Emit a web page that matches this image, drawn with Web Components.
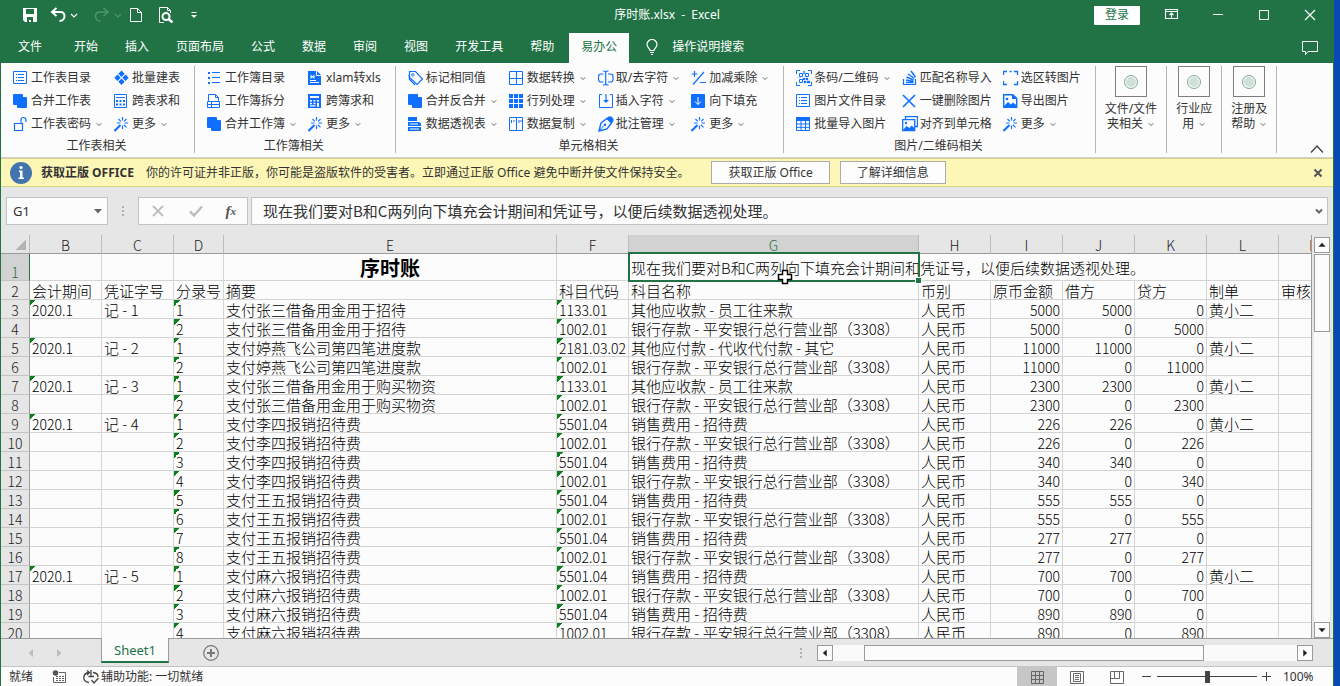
<!DOCTYPE html>
<html lang="zh-CN">
<head>
<meta charset="utf-8">
<title>序时账.xlsx - Excel</title>
<style>
  html, body { height: 100%; margin: 0; }
  body {
    background: linear-gradient(90deg, #04276b, #0a48b4);
    font-family: "Noto Sans", "Noto Sans CJK SC", sans-serif;
    font-size: 12px;
    line-height: 16px;
    color: #333;
    overflow: hidden;
  }
</style>
</head>
<body>
<excel-window></excel-window>

<script>
const BLUE = "#0f6fff";

/* every icon is drawn on a 16 x 16 box */
const ICONS = {
  chevron: `<path d="M5 7l3 3 3-3" fill="none" stroke="currentColor" stroke-width="1.2"/>`,
  chevronBold: `<path d="M5 6.500l3 3 3-3" fill="none" stroke="currentColor" stroke-width="2"/>`,
  chevronUp: `<path d="M2 11.500L8 5l6 6.500" fill="none" stroke="currentColor" stroke-width="1.400"/>`,
  save: `<path d="M1 1h14v14H3l-2-2zM4 2v5h8V2zM5 10v5h2v-2h2v2h2v-5z" fill="currentColor" fill-rule="evenodd"/>`,
  undo: `<path d="M6.500 1L2 5l4.500 4M2.500 5H10c3 0 4.500 2 4.500 4.200S13 14 9.500 14" fill="none" stroke="currentColor" stroke-width="2"/>`,
  redo: `<path d="M9.500 1L14 5 9.500 9M13.500 5H6C3 5 1.500 7 1.500 9.200S3 14 6.500 14" fill="none" stroke="currentColor" stroke-width="1.500"/>`,
  file: `<path d="M2.500 1.500h7l4 4v9h-11zM9.500 1.500v4h4" fill="none" stroke="currentColor"/>`,
  preview: `<path d="M6 15.500H1.500V.5h8l3 3V6M9.500.5v3h3" fill="none" stroke="currentColor"/><circle cx="8" cy="9.500" r="3.500" fill="none" stroke="currentColor" stroke-width="2"/><path d="M10.500 12l4 3.500" stroke="currentColor" stroke-width="2.500"/>`,
  customize: `<path d="M5.500 5.500h5" stroke="currentColor"/><path d="M5 8h6l-3 3z" fill="currentColor"/>`,
  display: `<path d="M1.500 2.500h12v9h-12zM1.500 4.500h12M7.500 11V6M5.500 8l2-2 2 2" fill="none" stroke="currentColor" stroke-width="1.100"/>`,
  minimize: `<path d="M3 7.500h10" stroke="currentColor"/>`,
  maximize: `<path d="M3.500 3.500h9v9h-9z" fill="none" stroke="currentColor"/>`,
  close: `<path d="M3 3l10 10M13 3L3 13" stroke="currentColor" stroke-width="1.200"/>`,
  closeBold: `<path d="M4.500 4.500l7 7M11.500 4.500l-7 7" stroke="currentColor" stroke-width="2"/>`,
  cancel: `<path d="M3 3l10 10M13 3L3 13" stroke="currentColor" stroke-width="1.800"/>`,
  comment: `<path d="M.5 2.500h15v10H6l-2.500 3v-3h-3z" fill="none" stroke="currentColor"/>`,
  bulb: `<path d="M6 11.500c0-2-3-3-3-6a5 5 0 0 1 10 0c0 3-3 4-3 6zM6 13.500h4M7 15.500h2" fill="none" stroke="currentColor" stroke-width="1.200"/>`,
  list: `<path d="M.5 1.500h13v12H.5z" fill="none" stroke="${BLUE}"/><path d="M3 4.500h1M3 7.500h1M3 10.500h1M5 4.500h6M5 7.500h6M5 10.500h6" stroke="${BLUE}"/>`,
  merge: `<path d="M1 1h8a1 1 0 0 1 1 1v2h3a1 1 0 0 1 1 1v9a1 1 0 0 1-1 1H5a1 1 0 0 1-1-1v-2H1a1 1 0 0 1-1-1V2a1 1 0 0 1 1-1z" fill="${BLUE}"/>`,
  lock: `<path d="M1.500 7.500h8v7h-8zM8 7V4a2.500 2.500 0 0 1 5 0v2" fill="none" stroke="${BLUE}" stroke-width="1.200"/>`,
  diamonds: `<path d="M7.500.5l3.200 3.200-3.200 3.200-3.200-3.200zM3.500 4.500l3.200 3.200-3.200 3.200L.3 7.700zM11.500 4.500l3.200 3.200-3.200 3.200-3.200-3.200zM7.500 8.500l3.200 3.200-3.200 3.200-3.200-3.200z" fill="${BLUE}"/>`,
  calc: `<path d="M.5 1.500h12v13H.5zM2 4.500h9" fill="none" stroke="${BLUE}"/><path d="M2 7h2v2H2zM5.500 7h2v2h-2zM9 7h2v2H9zM2 10.500h2v2H2zM5.500 10.500h2v2h-2zM9 10.500h2v2H9z" fill="${BLUE}"/>`,
  calcBold: `<path d="M0 1h13v14H0zM2 3v2h9V3zM2 7v1.500h2V7zM5.500 7v1.500h2V7zM9 7v1.500h2V7zM2 9.700v1.500h2V9.700zM5.500 9.700v1.500h2V9.700zM9 9.700v4h2v-4zM2 12.300v1.300h5.500v-1.300z" fill="${BLUE}" fill-rule="evenodd"/>`,
  wand: `<path d="M.5 15l6-6" stroke="${BLUE}" stroke-width="2"/><path d="M8.500 1v3.500M8.500 9.500V13M10.500 7H14M3 7h3.500M4.500 3l2.300 2.300M12.500 3l-2.300 2.300M10 8.800l2.500 2.500" stroke="${BLUE}" stroke-width="1.200"/>`,
  bullets: `<path d="M1 2h2v2H1zM1 7h2v2H1zM1 12h2v2H1z" fill="${BLUE}"/><path d="M5 2.500h8M5 7.500h8M5 12.500h8" stroke="${BLUE}"/>`,
  sheetFile: `<path d="M1.500 9V1.500h7l3 3V9M8.500 1.500v3h3M.5 8.500h12v6H.5zM.5 11.500h12M4.500 9v5.500" fill="none" stroke="${BLUE}"/>`,
  convert: `<path d="M0 1h9l4 4v10H0z" fill="${BLUE}"/><path d="M8.500 1v4.500H13M2 10.500h6M2 12.500h9" fill="none" stroke="#fff"/><path d="M2.500 5l4 3.500M6.500 5l-4 3.500M2 6.800h5" stroke="#fff"/>`,
  tag: `<path d="M1.500 1.500h6l7 7.500-5.500 5.500-7.500-7zM1 5l.5 4.500 5.500 5.500" fill="none" stroke="${BLUE}" stroke-width="1.200"/><circle cx="4.800" cy="4.800" r="1.200" fill="none" stroke="${BLUE}"/>`,
  window4: `<path d="M.5 1.500h13v13H.5zM7.500 1.500v13M.5 8.500h13" fill="none" stroke="${BLUE}"/>`,
  textWidth: `<path d="M5.500 4H3a2.500 2.500 0 0 0-2.500 2.500v3A2.500 2.500 0 0 0 3 12h2.500M10 4h2.500A2.500 2.500 0 0 1 15 6.500v3a2.500 2.500 0 0 1-2.500 2.500H10M7.700 2v12M5 1c2 0 2.700.5 2.700 1.500M10.500 1c-2 0-2.800.5-2.800 1.500M5 15c2 0 2.700-.5 2.700-1.500M10.500 15c-2 0-2.800-.5-2.800-1.500" fill="none" stroke="${BLUE}" stroke-width="1.200"/>`,
  plusMinus: `<path d="M3.500 1v6M.5 4h6M9 12.500h6M13 2L2 14.500" stroke="${BLUE}" stroke-width="1.200"/>`,
  blocks: `<path d="M0 1h4v4H0zM5 1h4v4H5zM10 1h4v4h-4zM0 6h4v4H0zM5 6h4v4H5zM10 6h4v4h-4zM0 11h4v4H0zM5 11h4v4H5zM10 11h4v4h-4z" fill="${BLUE}"/>`,
  insert: `<path d="M4 1.500H1.500v13h13v-13H12" fill="none" stroke="${BLUE}"/><path d="M8 1v8" stroke="${BLUE}" stroke-width="1.200"/><path d="M5 7h6l-3 3z" fill="${BLUE}"/>`,
  fillDown: `<rect x="0" y="1" width="14" height="14" rx="1" fill="${BLUE}"/><path d="M7 4v7.500M4 8.500l3 3 3-3" fill="none" stroke="#fff"/>`,
  pivot: `<path d="M0 1h9v4H0zM0 6h11l2 1.500V10H0zM0 11h13v4H0z" fill="${BLUE}"/><path d="M2 8h8M2 13h9" stroke="#fff"/>`,
  columns: `<path d="M.5 1.500h13v13H.5zM7.500 1.500v13M2.500 4v3M5 4v2M10 4v3M12 4v2" fill="none" stroke="${BLUE}"/>`,
  pen: `<path d="M1 15l2-8 6-4.500 4.500 4.500L9 13z" fill="none" stroke="${BLUE}" stroke-width="1.400"/><path d="M1 15l5-5.500" stroke="${BLUE}"/><circle cx="7" cy="8.700" r="1.300" fill="${BLUE}"/><path d="M8.500 2.500L10.500.5h3L15.500 3v2l-2 2.500z" fill="${BLUE}"/>`,
  qr: `<path d="M.5 4V.5H4M12 .5h3.500V4M.5 12v3.500H4M15.500 12v3.500H12M3.500 3.500h3v3h-3zM9.500 3.500h3v3h-3zM3.500 9.500h3v3h-3z" fill="none" stroke="${BLUE}"/><path d="M1 7.500h4M7 8h2v2H7zM10 8h2v2h-2zM8 11h2v2H8zM11 11h3v2h-3zM7.500 1h1v3h-1z" fill="${BLUE}" stroke="${BLUE}" stroke-width=".3"/>`,
  stack: `<path d="M1.500 9v5.500h12V9" fill="none" stroke="${BLUE}" stroke-width="1.200"/><path d="M4 12.500h7.500M4 10l7.500 1.500M4.500 7l7 3M6 4l6.500 4.500M9 1l4.500 6" stroke="${BLUE}" stroke-width="1.400"/>`,
  expand: `<path d="M.5 5V1.500H4M6.500 1.500h2M11 1.500h3.500V5M14.500 11v3.500H11M4 14.500H.5V11" fill="none" stroke="${BLUE}" stroke-width="1.300"/>`,
  cross: `<path d="M1 2l12 12M13 2L1 14" stroke="${BLUE}" stroke-width="1.600"/>`,
  picture: `<path d="M.7 1.700h9l4 3.500v9.100H.7z" fill="none" stroke="${BLUE}" stroke-width="1.400"/><path d="M9 1v5h5M1 13l4-4 3 2.500 2-2 4 3V15H1z" fill="${BLUE}"/><circle cx="4" cy="6" r="1.300" fill="${BLUE}"/>`,
  table: `<path d="M.5 1.500h13v13H.5zM.5 8h13M.5 11.300h13M5 4v10.500M9.500 4v10.500" fill="none" stroke="${BLUE}"/><path d="M0 1h14v4H0z" fill="${BLUE}"/>`,
  pictures: `<path d="M3.500 3V.5h12v10H13M.7 3.700h12v11H.7z" fill="none" stroke="${BLUE}" stroke-width="1.300"/><path d="M1 14l3.500-4 3 2 2-2.500 3 2.500v2.500z" fill="${BLUE}"/><circle cx="4" cy="7" r="1.200" fill="${BLUE}"/>`,
  check: `<path d="M2 8.500l4 4 8-9" fill="none" stroke="currentColor" stroke-width="2.500"/>`,
  triDown: `<path d="M4 6h8l-4 4.500z" fill="currentColor"/>`,
  triUp: `<path d="M4 10h8L8 5.500z" fill="currentColor"/>`,
  triLeft: `<path d="M10 4v8L5.500 8z" fill="currentColor"/>`,
  triRight: `<path d="M6 4v8l4.500-4z" fill="currentColor"/>`,
  add: `<circle cx="8" cy="8" r="7.300" fill="none" stroke="currentColor" stroke-width="1.200"/><path d="M8 4v8M4 8h8" stroke="currentColor" stroke-width="2"/>`,
  dots: `<path d="M7 3h2v2H7zM7 7h2v2H7zM7 11h2v2H7z" fill="#b0b0b0"/>`,
  macro: `<circle cx="4.500" cy="4" r="2.800" fill="#555"/><path d="M8 3.500h6.500v10h-12V8M5 7.500h2M8 7.500h2M11 7.500h2M5 9.500h2M8 9.500h2M11 9.500h2M5 11.500h2M8 11.500h2M11 11.500h2" fill="none" stroke="#666"/>`,
  access: `<path d="M6 3.500C2 4 .8 6 .8 8.500S2.500 13 6 13.500M10 3.500c3 .3 5 2 5 4.500M4 1.500l2.500 2L4 6M8 1v6M5.500 7.500H11M8.500 11l2.500 3 4.500-5" fill="none" stroke="#444" stroke-width="1.300"/>`,
  gridView: `<path d="M2.500 2.500h12v12h-12zM6.500 2.500v12M10.500 2.500v12M2.500 6.500h12M2.500 10.500h12" fill="none" stroke="#666"/>`,
  pageView: `<path d="M1.500 2.500h13v12h-13zM4.500 4.500h7v8h-7zM6 6.500h4M6 8.500h4M6 10.500h4" fill="none" stroke="#666"/>`,
  breakView: `<path d="M1.500 2.500h13v12h-13zM5.500 2.500v7h5v-7M1.500 9.500h4" fill="none" stroke="#666"/>`,
  minus: `<path d="M3 7.500h9" stroke="#444" stroke-width="1"/>`,
  plus: `<path d="M3 7.500h9M7.500 3v9" stroke="#444" stroke-width="1"/>`
};

class UiIcon extends HTMLElement {
  constructor() {
    super();
    this.attachShadow({ mode: "open" });
  }
  connectedCallback() {
    this.shadowRoot.innerHTML = `
      <style>
        :host { display: block; flex: none; width: 16px; height: 16px; }
        svg { display: block; width: 100%; height: 100%; }
      </style>
      <svg viewBox="0 0 16 16" aria-hidden="true">${ICONS[this.getAttribute("name")]}</svg>
    `;
  }
}
customElements.define("ui-icon", UiIcon);

const BUTTON_RESET = `
  button {
    font: inherit;
    color: inherit;
    background: none;
    border: 0;
    padding: 0;
    margin: 0;
    display: flex;
    align-items: center;
    justify-content: center;
  }
`;

class TitleBar extends HTMLElement {
  constructor() {
    super();
    this.attachShadow({ mode: "open" });
  }
  connectedCallback() {
    this.shadowRoot.innerHTML = `
      <style>
        ${BUTTON_RESET}
        :host {
          display: grid;
          grid-template-columns: 1fr auto 1fr;
          align-items: center;
          height: 33px;
          box-sizing: border-box;
          padding-bottom: 3px;
          background: #217346;
          color: #fff;
        }
        .quick { display: flex; align-items: center; padding-left: 21px; }
        .quick .pair { display: flex; margin-left: 12px; }
        .quick .new { margin-left: 2px; }
        .quick .look { margin-left: 14px; }
        .quick .more { margin-left: 12px; }
        .off { color: #4f9470; }
        .name { white-space: pre; }
        .win { display: flex; justify-content: flex-end; align-items: center; }
        .win .box { width: 46px; height: 30px; }
        .login { background: #fff; color: #217346; width: 46px; height: 19px; margin-right: 9px; border-radius: 1px; }
      </style>
      <div class="quick">
        <button aria-label="保存"><ui-icon name="save"></ui-icon></button>
        <span class="pair">
          <button aria-label="撤消"><ui-icon name="undo"></ui-icon></button>
          <button aria-label="撤消列表"><ui-icon name="chevron"></ui-icon></button>
        </span>
        <span class="pair off">
          <button aria-label="恢复"><ui-icon name="redo"></ui-icon></button>
          <button aria-label="恢复列表"><ui-icon name="chevron"></ui-icon></button>
        </span>
        <button class="new" aria-label="新建"><ui-icon name="file"></ui-icon></button>
        <button class="look" aria-label="打印预览"><ui-icon name="preview"></ui-icon></button>
        <button class="more" aria-label="自定义"><ui-icon name="customize"></ui-icon></button>
      </div>
      <span class="name">序时账.xlsx  -  Excel</span>
      <div class="win">
        <button class="login">登录</button>
        <button class="box" aria-label="功能区显示选项"><ui-icon name="display"></ui-icon></button>
        <button class="box" aria-label="最小化"><ui-icon name="minimize"></ui-icon></button>
        <button class="box" aria-label="最大化"><ui-icon name="maximize"></ui-icon></button>
        <button class="box" aria-label="关闭"><ui-icon name="close"></ui-icon></button>
      </div>
    `;
  }
}
customElements.define("title-bar", TitleBar);

class RibbonTabs extends HTMLElement {
  constructor() {
    super();
    this.attachShadow({ mode: "open" });
  }
  connectedCallback() {
    const tabs = ["文件", "开始", "插入", "页面布局", "公式", "数据", "审阅", "视图", "开发工具", "帮助", "易办公"];
    const active = "易办公";
    this.shadowRoot.innerHTML = `
      <style>
        ${BUTTON_RESET}
        :host {
          display: flex;
          align-items: stretch;
          gap: 3px;
          height: 30px;
          padding: 0 15px 0 5px;
          background: #217346;
          color: #fff;
        }
        .tab { padding: 0 12px 2px; }
        .tab:first-of-type { margin-right: 5px; }
        .active { background: #fcfcfc; color: #217346; }
        .search { gap: 12px; margin-left: 12px; padding-bottom: 2px; }
        .note { margin-left: auto; padding-bottom: 2px; }
      </style>
      ${tabs.map(t => `<button class="tab ${t === active ? "active" : ""}">${t}</button>`).join("")}
      <button class="search"><ui-icon name="bulb"></ui-icon>操作说明搜索</button>
      <button class="note" aria-label="批注"><ui-icon name="comment"></ui-icon></button>
    `;
  }
}
customElements.define("ribbon-tabs", RibbonTabs);

/* small command: icon, text and an optional arrow */
class RibbonCommand extends HTMLElement {
  constructor() {
    super();
    this.attachShadow({ mode: "open" });
  }
  connectedCallback() {
    this.shadowRoot.innerHTML = `
      <style>
        ${BUTTON_RESET}
        :host { display: block; }
        button { height: 23px; white-space: nowrap; }
        .icon { margin-right: 2px; }
        .arrow { width: 12px; height: 12px; margin: 0 -2px 0 2px; color: #555; }
      </style>
      <button>
        <ui-icon class="icon" name="${this.getAttribute("icon")}"></ui-icon>
        <slot></slot>
        ${this.hasAttribute("drop") ? `<ui-icon class="arrow" name="chevron"></ui-icon>` : ""}
      </button>
    `;
  }
}
customElements.define("ribbon-command", RibbonCommand);

class RibbonGroup extends HTMLElement {
  constructor() {
    super();
    this.attachShadow({ mode: "open" });
  }
  connectedCallback() {
    this.shadowRoot.innerHTML = `
      <style>
        :host {
          display: flex;
          flex-direction: column;
          flex: none;
          height: 87px;
          padding: 0 14px 0 12px;
          border-right: 1px solid #b4b4b4;
        }
        .commands {
          display: grid;
          grid-template-rows: repeat(3, 23px);
          grid-auto-flow: column;
          grid-auto-columns: auto;
          column-gap: 11px;
        }
        .label { text-align: center; line-height: 22px; }
      </style>
      <div class="commands"><slot></slot></div>
      <div class="label">${this.getAttribute("label")}</div>
    `;
  }
}
customElements.define("ribbon-group", RibbonGroup);

/* large command with a placeholder picture over two lines of text */
class RibbonBig extends HTMLElement {
  constructor() {
    super();
    this.attachShadow({ mode: "open" });
  }
  connectedCallback() {
    this.shadowRoot.innerHTML = `
      <style>
        ${BUTTON_RESET}
        :host { display: block; flex: none; height: 87px; border-right: 1px solid #b4b4b4; }
        button { flex-direction: column; padding: 0 9px; line-height: 15px; }
        .pic {
          width: 30px;
          height: 29px;
          border: 1px solid #7d7d7d;
          display: flex;
          align-items: center;
          justify-content: center;
          margin-bottom: 4px;
        }
        .dot { width: 10px; height: 10px; border-radius: 50%; border: 1px solid #7fae97; background: #cfe0d7; box-shadow: inset 0 0 0 1px #fff; padding: 1px; }
        .line { display: flex; align-items: center; white-space: nowrap; }
        ui-icon { width: 12px; height: 12px; margin: 0 -2px 0 2px; color: #555; }
      </style>
      <button>
        <span class="pic"><span class="dot"></span></span>
        <span class="line">${this.getAttribute("top")}</span>
        <span class="line">${this.getAttribute("bottom")}<ui-icon name="chevron"></ui-icon></span>
      </button>
    `;
  }
}
customElements.define("ribbon-big", RibbonBig);

class RibbonBar extends HTMLElement {
  constructor() {
    super();
    this.attachShadow({ mode: "open" });
  }
  connectedCallback() {
    this.shadowRoot.innerHTML = `
      <style>
        ${BUTTON_RESET}
        :host {
          display: flex;
          height: 95px;
          box-sizing: border-box;
          padding-top: 3px;
          background: #fcfcfc;
          border-bottom: 1px solid #cfcfcf;
        }
        .fold { margin: auto 8px 0 auto; color: #444; }
      </style>
      <ribbon-group label="工作表相关">
        <ribbon-command icon="list">工作表目录</ribbon-command>
        <ribbon-command icon="merge">合并工作表</ribbon-command>
        <ribbon-command icon="lock" drop>工作表密码</ribbon-command>
        <ribbon-command icon="diamonds">批量建表</ribbon-command>
        <ribbon-command icon="calc">跨表求和</ribbon-command>
        <ribbon-command icon="wand" drop>更多</ribbon-command>
      </ribbon-group>
      <ribbon-group label="工作簿相关">
        <ribbon-command icon="bullets">工作簿目录</ribbon-command>
        <ribbon-command icon="sheetFile">工作簿拆分</ribbon-command>
        <ribbon-command icon="merge" drop>合并工作簿</ribbon-command>
        <ribbon-command icon="convert">xlam转xls</ribbon-command>
        <ribbon-command icon="calcBold">跨簿求和</ribbon-command>
        <ribbon-command icon="wand" drop>更多</ribbon-command>
      </ribbon-group>
      <ribbon-group label="单元格相关">
        <ribbon-command icon="tag">标记相同值</ribbon-command>
        <ribbon-command icon="merge" drop>合并反合并</ribbon-command>
        <ribbon-command icon="pivot" drop>数据透视表</ribbon-command>
        <ribbon-command icon="window4" drop>数据转换</ribbon-command>
        <ribbon-command icon="blocks" drop>行列处理</ribbon-command>
        <ribbon-command icon="columns" drop>数据复制</ribbon-command>
        <ribbon-command icon="textWidth" drop>取/去字符</ribbon-command>
        <ribbon-command icon="insert" drop>插入字符</ribbon-command>
        <ribbon-command icon="pen" drop>批注管理</ribbon-command>
        <ribbon-command icon="plusMinus" drop>加减乘除</ribbon-command>
        <ribbon-command icon="fillDown">向下填充</ribbon-command>
        <ribbon-command icon="wand" drop>更多</ribbon-command>
      </ribbon-group>
      <ribbon-group label="图片/二维码相关">
        <ribbon-command icon="qr" drop>条码/二维码</ribbon-command>
        <ribbon-command icon="list">图片文件目录</ribbon-command>
        <ribbon-command icon="table">批量导入图片</ribbon-command>
        <ribbon-command icon="stack">匹配名称导入</ribbon-command>
        <ribbon-command icon="cross">一键删除图片</ribbon-command>
        <ribbon-command icon="pictures">对齐到单元格</ribbon-command>
        <ribbon-command icon="expand">选区转图片</ribbon-command>
        <ribbon-command icon="picture">导出图片</ribbon-command>
        <ribbon-command icon="wand" drop>更多</ribbon-command>
      </ribbon-group>
      <ribbon-big top="文件/文件" bottom="夹相关"></ribbon-big>
      <ribbon-big top="行业应" bottom="用"></ribbon-big>
      <ribbon-big top="注册及" bottom="帮助"></ribbon-big>
      <button class="fold" aria-label="折叠功能区"><ui-icon name="chevronUp"></ui-icon></button>
    `;
  }
}
customElements.define("ribbon-bar", RibbonBar);

class MessageBar extends HTMLElement {
  constructor() {
    super();
    this.attachShadow({ mode: "open" });
  }
  connectedCallback() {
    this.shadowRoot.innerHTML = `
      <style>
        ${BUTTON_RESET}
        :host {
          display: flex;
          align-items: center;
          height: 29px;
          box-sizing: border-box;
          padding: 0 7px 0 9px;
          background: #fcf7b6;
          border: solid #d8d28a;
          border-width: 1px 0;
          white-space: nowrap;
        }
        svg { width: 22px; height: 22px; flex: none; }
        b { margin: 0 12px 0 9px; }
        .go { height: 23px; padding: 0 16px; background: #fdfdfd; border: 1px solid #ababab; margin-left: 10px; }
        .first { margin-left: 22px; }
        .x { margin-left: auto; color: #555; }
      </style>
      <svg viewBox="0 0 22 22" aria-hidden="true">
        <circle cx="11" cy="11" r="11" fill="#4474ae"/>
        <circle cx="11" cy="5.500" r="1.600" fill="#fff"/>
        <path d="M9 8.500h3.500v7H14V17H8.500v-1.500H10V10H9z" fill="#fff"/>
      </svg>
      <b>获取正版 OFFICE</b>
      <span>你的许可证并非正版，你可能是盗版软件的受害者。立即通过正版 Office 避免中断并使文件保持安全。</span>
      <button class="go first">获取正版 Office</button>
      <button class="go">了解详细信息</button>
      <button class="x" aria-label="关闭此消息"><ui-icon name="closeBold"></ui-icon></button>
    `;
  }
}
customElements.define("message-bar", MessageBar);

class FormulaBar extends HTMLElement {
  constructor() {
    super();
    this.attachShadow({ mode: "open" });
  }
  connectedCallback() {
    this.shadowRoot.innerHTML = `
      <style>
        ${BUTTON_RESET}
        :host { display: flex; align-items: center; padding: 10px 5px 10px 5px; background: #e6e6e6; }
        .box {
          display: flex;
          align-items: center;
          height: 28px;
          box-sizing: border-box;
          background: #fcfcfc;
          border: 1px solid #c3c3c3;
        }
        input { font: inherit; color: inherit; border: 0; padding: 0; background: none; outline: none; min-width: 0; flex: 1; }
        .name { width: 102px; padding: 0 1px 0 6px; }
        .name input { font-size: 13px; }
        .name ui-icon { color: #666; }
        .dots { margin: 0 7px 0 7px; }
        .tools { width: 110px; justify-content: space-around; color: #bdbdbd; }
        .fx { font: italic bold 15px/20px "Liberation Serif", serif; color: #555; }
        .fx small { font-size: 11px; }
        .formula { flex: 1; margin-left: 3px; padding: 0 0 0 11px; }
        .formula input { font: 15px/22px "Noto Sans CJK SC", sans-serif; }
        .formula ui-icon { color: #666; }
      </style>
      <div class="box name">
        <input aria-label="名称框" value="G1">
        <button aria-label="名称列表"><ui-icon name="triDown"></ui-icon></button>
      </div>
      <ui-icon class="dots" name="dots"></ui-icon>
      <div class="box tools">
        <button aria-label="取消"><ui-icon name="cancel"></ui-icon></button>
        <button aria-label="输入"><ui-icon name="check"></ui-icon></button>
        <button class="fx" aria-label="插入函数">f<small>x</small></button>
      </div>
      <div class="box formula">
        <input aria-label="编辑栏" value="现在我们要对B和C两列向下填充会计期间和凭证号，以便后续数据透视处理。">
        <button aria-label="展开编辑栏"><ui-icon name="chevronBold"></ui-icon></button>
      </div>
    `;
  }
}
customElements.define("formula-bar", FormulaBar);

const BANK = "银行存款 - 平安银行总行营业部（3308）";
const COST = "销售费用 - 招待费";
const LI = "支付李四报销招待费";
const WANG = "支付王五报销招待费";
const MA = "支付麻六报销招待费";

/* 会计期间, 凭证字号, 分录号, 摘要, 科目代码, 科目名称, 原币金额, 借方, 贷方, 制单 */
const ROWS = [
  ["2020.1", "记 - 1", 1, "支付张三借备用金用于招待", "1133.01", "其他应收款 - 员工往来款", 5000, 5000, 0, "黄小二"],
  ["", "", 2, "支付张三借备用金用于招待", "1002.01", BANK, 5000, 0, 5000, ""],
  ["2020.1", "记 - 2", 1, "支付婷燕飞公司第四笔进度款", "2181.03.02", "其他应付款 - 代收代付款 - 其它", 11000, 11000, 0, "黄小二"],
  ["", "", 2, "支付婷燕飞公司第四笔进度款", "1002.01", BANK, 11000, 0, 11000, ""],
  ["2020.1", "记 - 3", 1, "支付张三借备用金用于购买物资", "1133.01", "其他应收款 - 员工往来款", 2300, 2300, 0, "黄小二"],
  ["", "", 2, "支付张三借备用金用于购买物资", "1002.01", BANK, 2300, 0, 2300, ""],
  ["2020.1", "记 - 4", 1, LI, "5501.04", COST, 226, 226, 0, "黄小二"],
  ["", "", 2, LI, "1002.01", BANK, 226, 0, 226, ""],
  ["", "", 3, LI, "5501.04", COST, 340, 340, 0, ""],
  ["", "", 4, LI, "1002.01", BANK, 340, 0, 340, ""],
  ["", "", 5, WANG, "5501.04", COST, 555, 555, 0, ""],
  ["", "", 6, WANG, "1002.01", BANK, 555, 0, 555, ""],
  ["", "", 7, WANG, "5501.04", COST, 277, 277, 0, ""],
  ["", "", 8, WANG, "1002.01", BANK, 277, 0, 277, ""],
  ["2020.1", "记 - 5", 1, MA, "5501.04", COST, 700, 700, 0, "黄小二"],
  ["", "", 2, MA, "1002.01", BANK, 700, 0, 700, ""],
  ["", "", 3, MA, "5501.04", COST, 890, 890, 0, ""],
  ["", "", 4, MA, "1002.01", BANK, 890, 0, 890, ""]
];

class SheetGrid extends HTMLElement {
  constructor() {
    super();
    this.attachShadow({ mode: "open" });
  }
  getRow(r, i) {
    const flag = v => (v === "" ? "" : "flag num");
    return `
      <tr>
        <th scope="row">${i + 3}</th>
        <td class="${flag(r[0])}">${r[0]}</td>
        <td>${r[1]}</td>
        <td class="flag num">${r[2]}</td>
        <td>${r[3]}</td>
        <td class="flag num">${r[4]}</td>
        <td>${r[5]}</td>
        <td>人民币</td>
        <td class="num right">${r[6]}</td>
        <td class="num right">${r[7]}</td>
        <td class="num right">${r[8]}</td>
        <td>${r[9]}</td>
        <td></td>
      </tr>`;
  }
  connectedCallback() {
    const letters = ["B", "C", "D", "E", "F", "G", "H", "I", "J", "K", "L", "M"];
    const heads = ["会计期间", "凭证字号", "分录号", "摘要", "科目代码", "科目名称", "币别", "原币金额", "借方", "贷方", "制单", "审核"];
    const widths = [29, 72, 72, 50, 333, 72, 290, 72, 72, 72, 72, 72];
    this.shadowRoot.innerHTML = `
      <style>
        :host {
          display: block;
          flex: 1;
          min-width: 0;
          overflow: hidden;
          background: #fcfcfc;
          border-right: 1px solid #9b9b9b;
          font-family: "Noto Sans CJK SC", sans-serif;
          font-weight: 300;
          color: #000;
        }
        table { width: 100%; min-width: 1350px; table-layout: fixed; border-collapse: separate; border-spacing: 0; font-size: 15px; line-height: 17px; }
        th, td { height: 17px; padding: 1px 2px 0; border: solid #d4d4d4; border-width: 0 1px 1px 0; white-space: nowrap; text-align: left; }
        th, .num { height: 16px; padding-top: 2px; font-size: 14px; line-height: 16px; }
        th { font-weight: inherit; text-align: center; background: #e6e6e6; color: #222; padding-left: 0; padding-right: 0; }
        thead th { border-color: #bdbdbd; border-bottom-color: #9b9b9b; }
        tbody th { border-right-color: #9b9b9b; border-bottom-color: #c4c4c4; }
        thead th.on { background: #d2d2d2; color: #217346; }
        tbody th.on { background: #d2d2d2; color: #217346; border-right-color: #217346; vertical-align: bottom; }
        .corner { background: linear-gradient(135deg, transparent 50%, #b4b4b4 50%) no-repeat right 3px bottom 3px / 11px 11px #e6e6e6; }
        .top td { height: 25px; }
        .title { font-size: 20px; font-weight: 700; text-align: center; }
        .spill { border-right-color: transparent; }
        .right { text-align: right; }
        .flag { background: linear-gradient(135deg, #0a7f1c 50%, transparent 50%) no-repeat 0 0 / 6px 6px; }
        .current { position: relative; }
        .frame { position: absolute; inset: -2px -2px -2px -1px; border: 2px solid #217346; pointer-events: none; }
        .handle { position: absolute; right: -4px; bottom: -4px; width: 5px; height: 5px; background: #217346; border: 1px solid #fcfcfc; }
        .pointer { position: absolute; left: 148px; top: 15px; width: 16px; height: 16px; }
      </style>
      <table>
        <colgroup>${widths.map(w => `<col style="width:${w}px">`).join("")}<col></colgroup>
        <thead>
          <tr><th class="corner"></th>${letters.map(l => `<th scope="col" class="${l === "G" ? "on" : ""}">${l}</th>`).join("")}</tr>
        </thead>
        <tbody>
          <tr class="top">
            <th scope="row" class="on">1</th>
            <td></td><td></td><td></td>
            <td class="title">序时账</td>
            <td></td>
            <td class="current">现在我们要对B和C两列向下填充会计期间和凭证号，以便后续数据透视处理。
              <span class="frame"></span><span class="handle"></span>
              <svg class="pointer" viewBox="0 0 16 16"><path d="M5.500 1.500h5v4h4v5h-4v4h-5v-4h-4v-5h4z" fill="#fff" stroke="#000" stroke-width="1.500"/></svg>
            </td>
            <td class="spill"></td><td class="spill"></td><td class="spill"></td>
            <td></td><td></td><td></td>
          </tr>
          <tr><th scope="row">2</th>${heads.map(h => `<td>${h}</td>`).join("")}</tr>
          ${ROWS.map((r, i) => this.getRow(r, i)).join("")}
        </tbody>
      </table>
    `;
  }
}
customElements.define("sheet-grid", SheetGrid);

class ScrollBar extends HTMLElement {
  constructor() {
    super();
    this.attachShadow({ mode: "open" });
  }
  connectedCallback() {
    const across = this.hasAttribute("horizontal");
    this.shadowRoot.innerHTML = `
      <style>
        ${BUTTON_RESET}
        :host { display: flex; flex-direction: ${across ? "row" : "column"}; }
        button { flex: none; width: 16px; height: 16px; box-sizing: border-box; background: #fcfcfc; border: 1px solid #9b9b9b; color: #222; }
        ui-icon { width: 14px; height: 14px; }
        .track { flex: 1; display: flex; flex-direction: inherit; background: #fafafa; }
        .before { flex: ${across ? 31 : 1}; }
        .thumb { flex: ${across ? 341 : 77}; background: #fcfcfc; border: 1px solid #9b9b9b; }
        .after { flex: ${across ? 94 : 294}; }
      </style>
      <button aria-label="${across ? "向左" : "向上"}"><ui-icon name="${across ? "triLeft" : "triUp"}"></ui-icon></button>
      <div class="track"><span class="before"></span><span class="thumb"></span><span class="after"></span></div>
      <button aria-label="${across ? "向右" : "向下"}"><ui-icon name="${across ? "triRight" : "triDown"}"></ui-icon></button>
    `;
  }
}
customElements.define("scroll-bar", ScrollBar);

class SheetTabs extends HTMLElement {
  constructor() {
    super();
    this.attachShadow({ mode: "open" });
  }
  connectedCallback() {
    this.shadowRoot.innerHTML = `
      <style>
        ${BUTTON_RESET}
        :host { display: flex; height: 28px; background: #e6e6e6; }
        .left, .right { display: flex; align-items: center; border-top: 1px solid #9b9b9b; }
        .nav { flex: none; width: 100px; display: flex; align-items: center; justify-content: center; gap: 12px; box-sizing: border-box; padding-right: 13px; border-top: 1px solid #9b9b9b; color: #bdbdbd; }
        .tab { flex: none; height: 25px; padding: 0 12px; font-size: 13px; background: #fcfcfc; color: #217346; border: solid #9b9b9b; border-width: 0 1px; border-bottom: 2px solid #217346; }
        .left { flex: 25; padding-left: 34px; color: #777; }
        .right { flex: 22; padding-right: 20px; gap: 8px; }
        scroll-bar { flex: 1; }
      </style>
      <div class="nav">
        <button aria-label="上一张"><ui-icon name="triLeft"></ui-icon></button>
        <button aria-label="下一张"><ui-icon name="triRight"></ui-icon></button>
      </div>
      <button class="tab">Sheet1</button>
      <div class="left"><button aria-label="新工作表"><ui-icon name="add"></ui-icon></button></div>
      <div class="right"><ui-icon name="dots"></ui-icon><scroll-bar horizontal></scroll-bar></div>
    `;
  }
}
customElements.define("sheet-tabs", SheetTabs);

class StatusBar extends HTMLElement {
  constructor() {
    super();
    this.attachShadow({ mode: "open" });
  }
  connectedCallback() {
    this.shadowRoot.innerHTML = `
      <style>
        ${BUTTON_RESET}
        :host { display: flex; align-items: center; height: 20px; box-sizing: border-box; padding-left: 8px; background: #fcfcfc; border-top: 1px solid #c4c4c4; }
        .macro { margin: 0 16px 0 18px; }
        .access { gap: 2px; }
        .views { display: flex; margin-left: auto; }
        .views button { width: 40px; height: 19px; }
        .views .on { background: #c6c6c6; }
        .zoom { display: flex; align-items: center; margin-left: 2px; }
        input { appearance: none; width: 100px; height: 16px; margin: 0 2px; background: linear-gradient(#444, #444) no-repeat center / 100% 1px; }
        input::-webkit-slider-thumb { appearance: none; width: 5px; height: 12px; background: #444; }
        output { width: 50px; margin-left: 8px; }
      </style>
      <span>就绪</span>
      <button class="macro" aria-label="录制宏"><ui-icon name="macro"></ui-icon></button>
      <button class="access"><ui-icon name="access"></ui-icon>辅助功能: 一切就绪</button>
      <div class="views">
        <button class="on" aria-label="普通"><ui-icon name="gridView"></ui-icon></button>
        <button aria-label="页面布局"><ui-icon name="pageView"></ui-icon></button>
        <button aria-label="分页预览"><ui-icon name="breakView"></ui-icon></button>
      </div>
      <div class="zoom">
        <button aria-label="缩小"><ui-icon name="minus"></ui-icon></button>
        <input type="range" min="0" max="100" value="50" aria-label="显示比例">
        <button aria-label="放大"><ui-icon name="plus"></ui-icon></button>
        <output>100%</output>
      </div>
    `;
  }
}
customElements.define("status-bar", StatusBar);

class ExcelWindow extends HTMLElement {
  constructor() {
    super();
    this.attachShadow({ mode: "open" });
  }
  connectedCallback() {
    this.shadowRoot.innerHTML = `
      <style>
        :host {
          display: flex;
          flex-direction: column;
          height: 100vh;
          margin-right: 6px;
          box-sizing: border-box;
          border: solid #217346;
          border-width: 0 1px;
          background: #e6e6e6;
        }
        title-bar, ribbon-tabs, ribbon-bar, message-bar, formula-bar, sheet-tabs, status-bar { flex: none; }
        .sheet { flex: 1; min-height: 0; display: flex; }
        scroll-bar { padding: 2px 3px 0 2px; }
      </style>
      <title-bar></title-bar>
      <ribbon-tabs></ribbon-tabs>
      <ribbon-bar></ribbon-bar>
      <message-bar></message-bar>
      <formula-bar></formula-bar>
      <div class="sheet">
        <sheet-grid></sheet-grid>
        <scroll-bar></scroll-bar>
      </div>
      <sheet-tabs></sheet-tabs>
      <status-bar></status-bar>
    `;
  }
}
customElements.define("excel-window", ExcelWindow);
</script>
</body>
</html>
